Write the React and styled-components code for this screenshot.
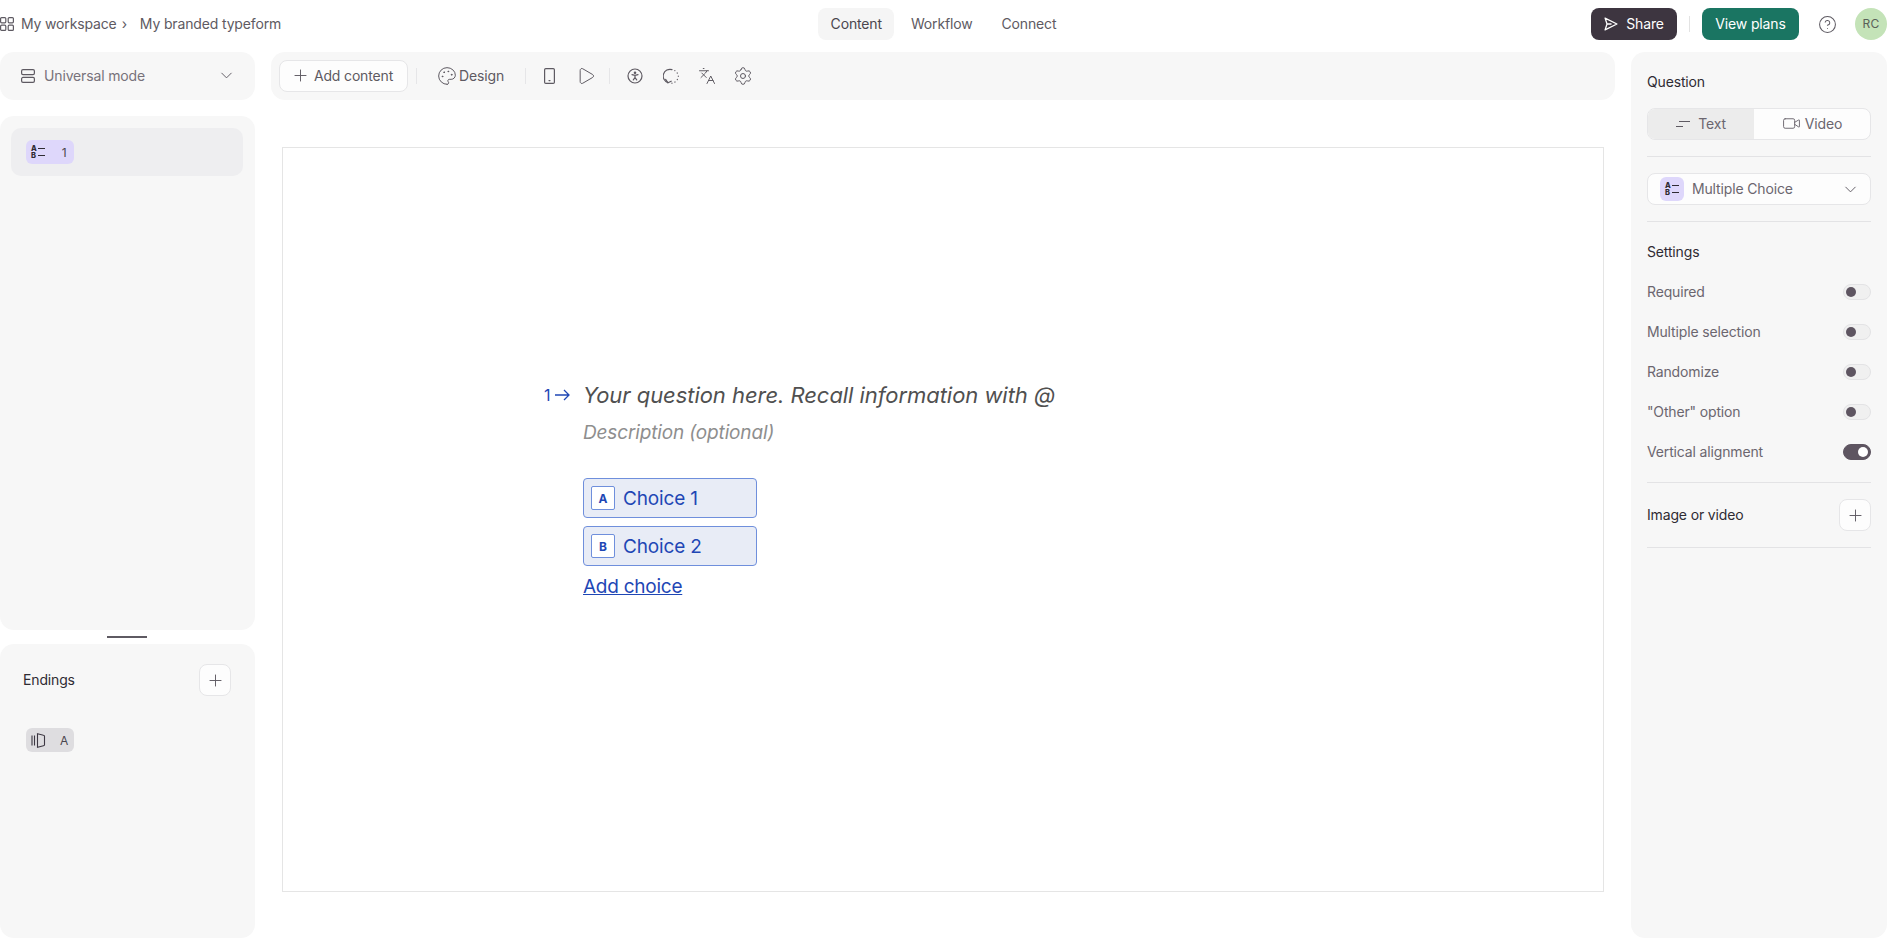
import React from 'react';
import styled, { createGlobalStyle } from 'styled-components';
import {
  ChevronDown,
  CircleHelp,
  Languages,
  Palette,
  Play,
  Plus,
  Settings,
  Video,
} from 'lucide-react';

const GlobalStyle = createGlobalStyle`
  html, body {
    margin: 0;
    padding: 0;
    background: #fff;
    font-family: Inter, "Liberation Sans", sans-serif;
    font-size: 14px;
    letter-spacing: -0.15px;
    color: #5e5a62;
  }
  * { box-sizing: border-box; }
  svg { flex: none; }
`;

//#region STYLES
const Page = styled.div`
  height: 951px;
  width: 1895px;
  overflow: hidden;
  display: flex;
  flex-direction: column;
`;

const TopBar = styled.header`
  height: 48px;
  flex: none;
  padding: 8px 8px 0 0;
  display: grid;
  grid-template-columns: 1fr auto 1fr;
  align-items: start;
`;

const Breadcrumb = styled.nav`
  display: flex;
  align-items: center;
  height: 32px;
  padding-bottom: 1px;
  color: #5e5a62;
`;

const Crumb = styled.span`
  margin-left: ${props => props.$gap}px;
`;

const Tabs = styled.nav`
  display: flex;
  gap: 4px;
`;

const Tab = styled.div`
  height: 32px;
  padding: 0 12.5px 1px;
  display: flex;
  align-items: center;
  border-radius: 8px;
  background: ${props => (props.$active ? '#f5f5f5' : 'transparent')};
  color: ${props => (props.$active ? '#4a464e' : '#5e5a62')};
`;

const TopActions = styled.div`
  display: flex;
  align-items: center;
  justify-content: flex-end;
  height: 32px;
`;

const ShareButton = styled.div`
  width: 86px;
  height: 32px;
  padding-bottom: 1px;
  border-radius: 8px;
  background: #3d3540;
  color: #fff;
  display: flex;
  align-items: center;
  justify-content: center;
  gap: 8px;
`;

const ActionDivider = styled.div`
  width: 1px;
  height: 16px;
  background: #e3e3e3;
  margin: 0 12px;
`;

const PlansButton = styled.div`
  width: 97px;
  height: 32px;
  padding-bottom: 1px;
  border-radius: 8px;
  background: #1a7562;
  color: #fff;
  display: flex;
  align-items: center;
  justify-content: center;
`;

const HelpWrap = styled.div`
  width: 56px;
  display: flex;
  justify-content: center;
  color: #5e5a62;
`;

const Avatar = styled.div`
  width: 32px;
  height: 32px;
  padding-bottom: 1px;
  border-radius: 50%;
  background: #c4e3b8;
  color: #5a6158;
  font-size: 12px;
  letter-spacing: 0.3px;
  display: flex;
  align-items: center;
  justify-content: center;
`;

const Workspace = styled.main`
  flex: 1;
  min-height: 0;
  padding: 4px 8px 13px 0;
  display: flex;
  gap: 16px;
`;

const LeftColumn = styled.aside`
  width: 255px;
  flex: none;
  display: flex;
  flex-direction: column;
`;

const Panel = styled.section`
  background: #f7f7f7;
  border-radius: 14px;
`;

const ModePanel = styled(Panel)`
  height: 48px;
  flex: none;
  padding: 0 19px 1px 21px;
  display: flex;
  align-items: center;
  gap: 9px;
  color: #77727b;
`;

const Grow = styled.span`
  flex: 1;
`;

const ListPanel = styled(Panel)`
  flex: 1;
  margin-top: 16px;
  padding: 12px 12px 12px 11px;
`;

const ListRow = styled.div`
  height: 48px;
  border-radius: 10px;
  background: #eeeef0;
  padding: 0 15px;
  display: flex;
  align-items: center;
`;

const Badge = styled.div`
  width: 48px;
  height: 24px;
  border-radius: 6px;
  background: ${props => props.$bg};
  padding: 0 4px 0 5px;
  display: flex;
  align-items: center;
  justify-content: space-between;
  color: #4a464e;
  font-size: 12px;
`;

const BadgeLabel = styled.span`
  width: 12px;
  text-align: center;
`;

const ChoiceMark = styled.div`
  width: 14px;
  height: 14px;
  flex: none;
  display: grid;
  grid-template-columns: 6px 7px;
  grid-template-rows: 7px 7px;
  column-gap: 1px;
  align-items: center;
  color: #2f2b33;
  font-size: 7.5px;
  font-weight: 800;
  line-height: 7px;
  letter-spacing: 0;
`;

const ChoiceMarkLine = styled.span`
  height: 1.2px;
  background: #2f2b33;
`;

const ResizeHandle = styled.div`
  width: 40px;
  height: 2px;
  flex: none;
  margin: 6px 0 6px 107px;
  background: #5e5a62;
`;

const EndingsPanel = styled(Panel)`
  height: 294px;
  flex: none;
  padding: 20px 24px 0 23px;
`;

const EndingsHeader = styled.div`
  display: flex;
  align-items: center;
  justify-content: space-between;
  color: #2f2b33;
`;

const RowLabel = styled.span`
  padding-bottom: 2px;
`;

const EndingRow = styled.div`
  margin: 32px 0 0 3px;
`;

const SquareButton = styled.div`
  width: 32px;
  height: 32px;
  border-radius: 8px;
  border: 1px solid #e6e6e8;
  background: #fdfdfd;
  color: #5e5a62;
  display: flex;
  align-items: center;
  justify-content: center;
`;

const CenterColumn = styled.div`
  flex: 1;
  min-width: 0;
  display: flex;
  flex-direction: column;
`;

const Toolbar = styled(Panel)`
  height: 48px;
  flex: none;
  padding: 0 8px;
  display: flex;
  align-items: center;
`;

const AddButton = styled.div`
  width: 129px;
  height: 32px;
  flex: none;
  padding: 0 3px 1px 0;
  border: 1px solid #e6e6e8;
  border-radius: 8px;
  background: #fdfdfd;
  display: flex;
  align-items: center;
  justify-content: center;
  gap: 4px;
`;

const ToolDivider = styled.div`
  width: 1px;
  height: 16px;
  flex: none;
  background: #e6e6e8;
  margin: ${props => props.$margin};
`;

const ToolLabel = styled.div`
  display: flex;
  align-items: center;
  gap: 2px;
  padding-bottom: 1px;
`;

const ToolIcons = styled.div`
  display: flex;
  align-items: center;
  gap: ${props => props.$gap}px;
`;

const ToolIcon = styled.div`
  width: 18px;
  height: 18px;
  display: flex;
  align-items: center;
  justify-content: center;
`;

const CanvasWrap = styled.div`
  flex: 1;
  min-height: 0;
  padding: 47px 11px 46px;
  display: flex;
`;

const Canvas = styled.div`
  flex: 1;
  border: 1px solid #e5e5e5;
  background: #fff;
  padding: 230px 0 0 261px;
`;

const QuestionRow = styled.div`
  display: flex;
  align-items: center;
  height: 34px;
`;

const QuestionNumber = styled.div`
  width: 39px;
  display: flex;
  align-items: center;
  gap: 5px;
  color: #1f47b5;
  font-size: 16px;
`;

const QuestionText = styled.div`
  font-style: italic;
  font-size: 22px;
  letter-spacing: -0.05px;
  color: #505050;
`;

const Description = styled.div`
  margin: 6px 0 0 39px;
  font-style: italic;
  font-size: 19px;
  line-height: 30px;
  color: #8e8e8e;
`;

const Choices = styled.div`
  margin: 30px 0 0 39px;
  width: 174px;
  display: flex;
  flex-direction: column;
  gap: 8px;
`;

const Choice = styled.div`
  height: 40px;
  border: 1px solid #6f8fdc;
  border-radius: 4px;
  background: #e8ecf6;
  padding: 0 7px;
  display: flex;
  align-items: center;
  gap: 8px;
  color: #1f47b5;
  font-size: 19px;
`;

const ChoiceKey = styled.div`
  width: 24px;
  height: 24px;
  border: 1px solid #6f8fdc;
  border-radius: 2px;
  background: #fff;
  font-size: 12px;
  font-weight: 700;
  display: flex;
  align-items: center;
  justify-content: center;
`;

const AddChoice = styled.div`
  margin: 6px 0 0 39px;
  font-size: 19px;
  letter-spacing: -0.25px;
  line-height: 30px;
  color: #1f47b5;
  text-decoration: underline;
`;

const RightPanel = styled(Panel)`
  width: 256px;
  flex: none;
  padding: 20px 16px 0;
`;

const PanelTitle = styled.div`
  color: #2f2b33;
  line-height: 20px;
`;

const Segment = styled.div`
  margin-top: 16px;
  height: 32px;
  border: 1px solid #e6e6e8;
  border-radius: 8px;
  background: #fdfdfd;
  overflow: hidden;
  display: flex;
`;

const SegmentItem = styled.div`
  flex: ${props => (props.$active ? '0 0 106px' : '1')};
  padding-bottom: 1px;
  display: flex;
  align-items: center;
  justify-content: center;
  gap: ${props => (props.$active ? 8 : 4)}px;
  background: ${props => (props.$active ? '#ececec' : 'transparent')};
  color: #6b666f;
`;

const Rule = styled.hr`
  margin: ${props => props.$margin};
  border: 0;
  border-top: 1px solid #e3e3e5;
`;

const TypeSelect = styled.div`
  height: 32px;
  border: 1px solid #e6e6e8;
  border-radius: 8px;
  background: #fdfdfd;
  padding: 0 10px 0 12px;
  display: flex;
  align-items: center;
  gap: 8px;
  color: #6b666f;
`;

const TypeIcon = styled.div`
  width: 24px;
  height: 24px;
  border-radius: 6px;
  background: #ded7fb;
  display: flex;
  align-items: center;
  justify-content: center;
`;

const SettingRows = styled.div`
  margin-top: 9px;
`;

const SettingRow = styled.div`
  height: 40px;
  display: flex;
  align-items: center;
  justify-content: space-between;
  color: #6b666f;
`;

const Toggle = styled.div`
  width: 28px;
  height: 16px;
  margin-top: 2px;
  border-radius: 8px;
  border: 1px solid ${props => (props.$on ? '#5e5561' : '#e3e3e5')};
  background: ${props => (props.$on ? '#5e5561' : '#f0f0f0')};
  padding: 2px;
  display: flex;
  justify-content: ${props => (props.$on ? 'flex-end' : 'flex-start')};
`;

const ToggleKnob = styled.span`
  width: 10px;
  height: 10px;
  border-radius: 50%;
  background: ${props => (props.$on ? '#fff' : '#5e5561')};
`;

const MediaRow = styled.div`
  display: flex;
  align-items: center;
  justify-content: space-between;
  color: #2f2b33;
`;
//#endregion

const GridIcon = () => (
  <svg width="14" height="14" viewBox="0 0 14 14" fill="none" stroke="currentColor" strokeWidth="1.2">
    <rect x="0.6" y="0.6" width="5.2" height="5.2" rx="1" />
    <rect x="8.2" y="0.6" width="5.2" height="5.2" rx="1" />
    <rect x="0.6" y="8.2" width="5.2" height="5.2" rx="1" />
    <rect x="8.2" y="8.2" width="5.2" height="5.2" rx="1" />
  </svg>
);

const ModeIcon = () => (
  <svg width="14" height="14" viewBox="0 0 14 14" fill="none" stroke="#5e5a62" strokeWidth="1.2">
    <rect x="0.6" y="0.6" width="12.8" height="5" rx="1.4" />
    <rect x="0.6" y="8.4" width="12.8" height="5" rx="1.4" />
  </svg>
);

const ChoiceGlyph = () => (
  <ChoiceMark>
    <span>A</span>
    <ChoiceMarkLine />
    <span>B</span>
    <ChoiceMarkLine />
  </ChoiceMark>
);

const EndingGlyph = () => (
  <svg width="15" height="15" viewBox="0 0 15 15" fill="none" stroke="#3d3843" strokeWidth="1.1">
    <path d="M1 2.5v10M3.5 2.5v10" />
    <path d="M6.5.8l6 1.4c.6.1 1 .5 1 1.1v8.4c0 .6-.4 1-1 1.1l-6 1.4z" />
  </svg>
);

const ShareGlyph = () => (
  <svg width="14" height="14" viewBox="0 0 13 13" fill="none" stroke="#fff" strokeWidth="1.2" strokeLinejoin="round">
    <path d="M1 1l11 5.5L1 12l1.8-5.5zM2.8 6.5H7" />
  </svg>
);

const PhoneGlyph = () => (
  <svg width="11" height="16" viewBox="0 0 11 16" fill="none" stroke="#5e5a62" strokeWidth="1.2">
    <rect x="0.6" y="0.6" width="9.8" height="14.8" rx="1.2" />
    <path d="M5 12.6h1" strokeLinecap="round" />
  </svg>
);

const AccessGlyph = () => (
  <svg width="16" height="16" viewBox="0 0 16 16" fill="none" stroke="#5e5a62" strokeWidth="1.2" strokeLinecap="round">
    <circle cx="8" cy="8" r="7" />
    <circle cx="8" cy="4.8" r="0.7" fill="#5e5a62" />
    <path d="M5 6.6l3 .7 3-.7M8 7.3v2.2M8 9.5l-1.7 2.4M8 9.5l1.7 2.4" />
  </svg>
);

const LogicGlyph = () => (
  <svg width="17" height="17" viewBox="0 0 17 17" fill="none" stroke="#5e5a62" strokeWidth="1.2" strokeLinecap="round" strokeLinejoin="round">
    <path d="M5 14.6A6.8 6.8 0 0 1 9 1.6" />
    <path d="M2.6 11.4l2.4 3.4 3.2-1.6" />
    <path d="M11.8 2.6l.1.1M14.2 5l.1.1M15.3 8.2v.1M14.4 11.4l-.1.1M12 14l-.1.1M9 15.2H8.9" />
  </svg>
);

const settings = [
  { label: 'Required' },
  { label: 'Multiple selection' },
  { label: 'Randomize' },
  { label: '"Other" option' },
  { label: 'Vertical alignment', on: true },
];

const choices = [
  { key: 'A', label: 'Choice 1' },
  { key: 'B', label: 'Choice 2' },
];

export default function App() {
  return (
    <Page>
      <GlobalStyle />
      <TopBar>
        <Breadcrumb>
          <GridIcon />
          <Crumb $gap={7}>My workspace</Crumb>
          <Crumb $gap={5}>›</Crumb>
          <Crumb $gap={13}>My branded typeform</Crumb>
        </Breadcrumb>
        <Tabs>
          <Tab $active>Content</Tab>
          <Tab>Workflow</Tab>
          <Tab>Connect</Tab>
        </Tabs>
        <TopActions>
          <ShareButton><ShareGlyph />Share</ShareButton>
          <ActionDivider />
          <PlansButton>View plans</PlansButton>
          <HelpWrap><CircleHelp size={19} strokeWidth={1.3} /></HelpWrap>
          <Avatar>RC</Avatar>
        </TopActions>
      </TopBar>

      <Workspace>
        <LeftColumn>
          <ModePanel>
            <ModeIcon />
            <span>Universal mode</span>
            <Grow />
            <ChevronDown size={19} strokeWidth={1.2} color="#5e5a62" />
          </ModePanel>
          <ListPanel>
            <ListRow>
              <Badge $bg="#ded7fb">
                <ChoiceGlyph />
                <BadgeLabel>1</BadgeLabel>
              </Badge>
            </ListRow>
          </ListPanel>
          <ResizeHandle />
          <EndingsPanel>
            <EndingsHeader>
              <RowLabel>Endings</RowLabel>
              <SquareButton><Plus size={19} strokeWidth={1.2} /></SquareButton>
            </EndingsHeader>
            <EndingRow>
              <Badge $bg="#dedde0">
                <EndingGlyph />
                <BadgeLabel>A</BadgeLabel>
              </Badge>
            </EndingRow>
          </EndingsPanel>
        </LeftColumn>

        <CenterColumn>
          <Toolbar>
            <AddButton><Plus size={19} strokeWidth={1.2} />Add content</AddButton>
            <ToolDivider $margin="0 20px 0 8px" />
            <ToolLabel><Palette size={20} strokeWidth={1.2} />Design</ToolLabel>
            <ToolDivider $margin="0 14px 0 21px" />
            <ToolIcons $gap={19}>
              <ToolIcon><PhoneGlyph /></ToolIcon>
              <ToolIcon><Play size={20} strokeWidth={1.2} /></ToolIcon>
            </ToolIcons>
            <ToolDivider $margin="0 16px 0 14px" />
            <ToolIcons $gap={18}>
              <ToolIcon><AccessGlyph /></ToolIcon>
              <ToolIcon><LogicGlyph /></ToolIcon>
              <ToolIcon><Languages size={18} strokeWidth={1.3} /></ToolIcon>
              <ToolIcon><Settings size={20} strokeWidth={1.2} /></ToolIcon>
            </ToolIcons>
          </Toolbar>
          <CanvasWrap>
            <Canvas>
              <QuestionRow>
                <QuestionNumber>
                  1
                  <svg width="15" height="12" viewBox="0 0 15 12" fill="none" stroke="#1f47b5" strokeWidth="1.3">
                    <path d="M0 6h14M9 1l5 5-5 5" />
                  </svg>
                </QuestionNumber>
                <QuestionText>Your question here. Recall information with @</QuestionText>
              </QuestionRow>
              <Description>Description (optional)</Description>
              <Choices>
                {choices.map(choice => (
                  <Choice key={choice.key}>
                    <ChoiceKey>{choice.key}</ChoiceKey>
                    {choice.label}
                  </Choice>
                ))}
              </Choices>
              <AddChoice>Add choice</AddChoice>
            </Canvas>
          </CanvasWrap>
        </CenterColumn>

        <RightPanel>
          <PanelTitle>Question</PanelTitle>
          <Segment>
            <SegmentItem $active>
              <svg width="14" height="8" viewBox="0 0 14 8" fill="none" stroke="#5e5a62" strokeWidth="1.2">
                <path d="M3 1.5h11M0 6.5h7" />
              </svg>
              Text
            </SegmentItem>
            <SegmentItem><Video size={19} strokeWidth={1.2} />Video</SegmentItem>
          </Segment>
          <Rule $margin="16px 0" />
          <TypeSelect>
            <TypeIcon><ChoiceGlyph /></TypeIcon>
            <RowLabel>Multiple Choice</RowLabel>
            <Grow />
            <ChevronDown size={19} strokeWidth={1.2} color="#5e5a62" />
          </TypeSelect>
          <Rule $margin="16px 0 20px" />
          <PanelTitle>Settings</PanelTitle>
          <SettingRows>
            {settings.map(item => (
              <SettingRow key={item.label}>
                {item.label}
                <Toggle $on={item.on}><ToggleKnob $on={item.on} /></Toggle>
              </SettingRow>
            ))}
          </SettingRows>
          <Rule $margin="11px 0 16px" />
          <MediaRow>
            <RowLabel>Image or video</RowLabel>
            <SquareButton><Plus size={19} strokeWidth={1.2} /></SquareButton>
          </MediaRow>
          <Rule $margin="16px 0 0" />
        </RightPanel>
      </Workspace>
    </Page>
  );
}
